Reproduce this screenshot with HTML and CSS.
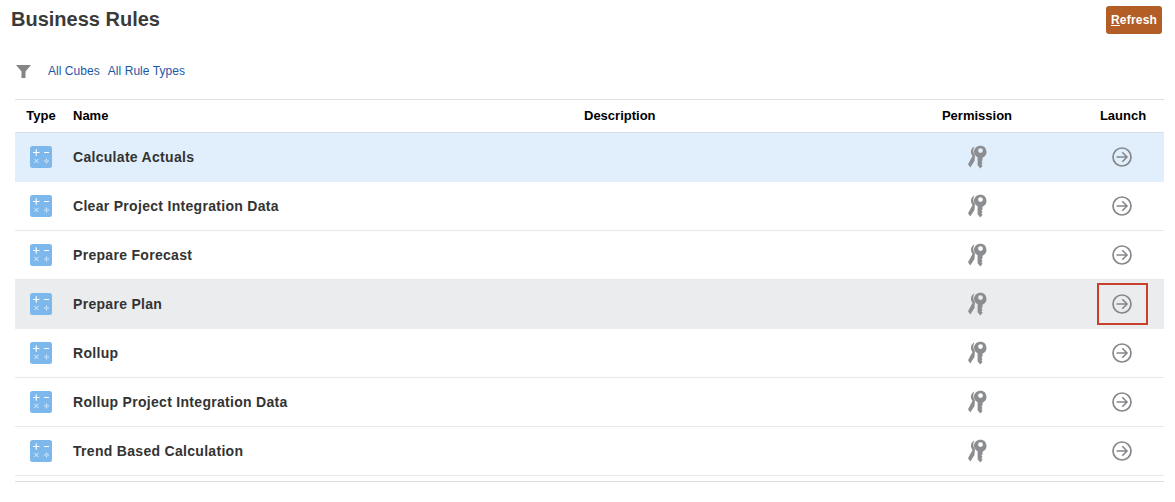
FILE: index.html
```html
<!DOCTYPE html>
<html lang="en">
<head>
<meta charset="utf-8">
<title>Business Rules</title>
<link rel="stylesheet" href="styles.css">
</head>
<body>
<svg class="defs" width="0" height="0" aria-hidden="true">
  <symbol id="calc" viewBox="0 0 22 22">
    <rect width="22" height="22" rx="2.5" fill="#7db8ec"/>
    <path d="M3 6.500h6.500M6.250 3.200v6.600M14 6.500h5" stroke="#fff" stroke-width="1.100" fill="none"/>
    <path d="M4.300 12.800l4.200 4.200M8.500 12.800l-4.200 4.200M14 15h5" stroke="#e6f2fc" stroke-width=".9" fill="none"/>
    <circle cx="16.500" cy="13.200" r=".7" fill="#e6f2fc"/>
    <circle cx="16.500" cy="16.800" r=".7" fill="#e6f2fc"/>
  </symbol>
  <symbol id="keys" viewBox="0 0 20 24">
    <path d="M6.500 1.500C3.300 2.800 2 6.500 3.800 9.800L4.500 11 0 19.300l2.300 3.200 4.200-6.500.4-5.800C4.800 7.500 4.800 4 6.500 1.500z" fill="#8b8d90"/>
    <path fill-rule="evenodd" d="M12.500.7C8.800.7 6 3.400 6 6.800c0 2.500 1.500 4.600 3.600 5.500v8l2.700 3.200 2.300-2.800-1.200-1.400 1.200-1.300-1.200-1.400 1.100-1.200v-2.600c2.300-.9 4-3 4-5.500C18.500 3.400 16.200.7 12.500.7zm0 2.500a2.400 2.400 0 1 1 0 4.800 2.400 2.400 0 0 1 0-4.800z" fill="#8b8d90"/>
  </symbol>
  <symbol id="go" viewBox="0 0 20 20">
    <circle cx="10" cy="10" r="9" fill="none" stroke="#85878a" stroke-width="1.700"/>
    <path d="M4.500 10h10.300M10.300 5.300l4.700 4.700-4.700 4.700" fill="none" stroke="#85878a" stroke-width="1.600"/>
  </symbol>
</svg>
<main class="page">
  <header class="top">
    <h1 class="title">Business Rules</h1>
    <button class="refresh" type="button"><u>R</u>efresh</button>
  </header>
  <div class="filters">
    <svg class="funnel" viewBox="0 0 15 13" aria-hidden="true"><path d="M0 0h15L9.500 6.500V13h-4V6.500z" fill="#858585"/></svg>
    <a class="link" href="#">All Cubes</a>
    <a class="link" href="#">All Rule Types</a>
  </div>
  <table class="rules">
    <colgroup>
      <col class="c-type"><col class="c-name"><col class="c-desc"><col class="c-perm"><col class="c-launch">
    </colgroup>
    <thead>
      <tr><th class="mid">Type</th><th>Name</th><th>Description</th><th class="mid">Permission</th><th class="mid">Launch</th></tr>
    </thead>
    <tbody>
      <tr class="selected"><td class="mid"><svg class="ic-calc"><use href="#calc"/></svg></td><td class="name">Calculate Actuals</td><td></td><td class="mid"><svg class="ic-keys"><use href="#keys"/></svg></td><td class="mid"><span class="launch"><svg class="ic-go"><use href="#go"/></svg></span></td></tr>
      <tr><td class="mid"><svg class="ic-calc"><use href="#calc"/></svg></td><td class="name">Clear Project Integration Data</td><td></td><td class="mid"><svg class="ic-keys"><use href="#keys"/></svg></td><td class="mid"><span class="launch"><svg class="ic-go"><use href="#go"/></svg></span></td></tr>
      <tr><td class="mid"><svg class="ic-calc"><use href="#calc"/></svg></td><td class="name">Prepare Forecast</td><td></td><td class="mid"><svg class="ic-keys"><use href="#keys"/></svg></td><td class="mid"><span class="launch"><svg class="ic-go"><use href="#go"/></svg></span></td></tr>
      <tr class="hover"><td class="mid"><svg class="ic-calc"><use href="#calc"/></svg></td><td class="name">Prepare Plan</td><td></td><td class="mid"><svg class="ic-keys"><use href="#keys"/></svg></td><td class="mid"><span class="launch marked"><svg class="ic-go"><use href="#go"/></svg></span></td></tr>
      <tr><td class="mid"><svg class="ic-calc"><use href="#calc"/></svg></td><td class="name">Rollup</td><td></td><td class="mid"><svg class="ic-keys"><use href="#keys"/></svg></td><td class="mid"><span class="launch"><svg class="ic-go"><use href="#go"/></svg></span></td></tr>
      <tr><td class="mid"><svg class="ic-calc"><use href="#calc"/></svg></td><td class="name">Rollup Project Integration Data</td><td></td><td class="mid"><svg class="ic-keys"><use href="#keys"/></svg></td><td class="mid"><span class="launch"><svg class="ic-go"><use href="#go"/></svg></span></td></tr>
      <tr><td class="mid"><svg class="ic-calc"><use href="#calc"/></svg></td><td class="name">Trend Based Calculation</td><td></td><td class="mid"><svg class="ic-keys"><use href="#keys"/></svg></td><td class="mid"><span class="launch"><svg class="ic-go"><use href="#go"/></svg></span></td></tr>
    </tbody>
  </table>
  <div class="foot-line"></div>
</main>
</body>
</html>
```
FILE: styles.css
```css
html, body {
  margin: 0;
  padding: 0;
  background: #fff;
  font-family: "Liberation Sans", Arial, sans-serif;
  overflow: hidden;
}
.defs { position: absolute; }
.page {
  width: 1175px;
  height: 502px;
  box-sizing: border-box;
  padding: 6px 11px 0 11px;
}
.top {
  display: flex;
  justify-content: space-between;
  align-items: flex-start;
  height: 28px;
  padding-right: 2px;
}
.title {
  margin: -2px 0 0;
  font-size: 20px;
  line-height: 30px;
  font-weight: bold;
  color: #3a3a3a;
}
.refresh {
  width: 56px;
  height: 28px;
  padding: 0;
  border: 0;
  border-radius: 3px;
  background: #b35e26;
  color: #fff;
  font: bold 12px "Liberation Sans", Arial, sans-serif;
  letter-spacing: .2px;
}
.filters {
  display: flex;
  align-items: center;
  height: 20px;
  margin-top: 27px;
  padding-left: 5px;
  gap: 8px;
}
.funnel {
  width: 15px;
  height: 13px;
  margin-right: 9px;
}
.link {
  font-size: 12px;
  letter-spacing: .05px;
  color: #1c57a5;
  text-decoration: none;
}
.rules {
  table-layout: fixed;
  border-collapse: separate;
  border-spacing: 0;
  width: 1149px;
  margin: 18px 0 0 4px;
  border-top: 1px solid #dfdfdf;
}
.c-type { width: 52px; }
.c-name { width: 511px; }
.c-desc { width: 294px; }
.c-perm { width: 210px; }
.c-launch { width: 82px; }
th {
  height: 33px;
  padding: 0 0 2px 6px;
  box-sizing: border-box;
  text-align: left;
  font-size: 13px;
  font-weight: bold;
  color: #000;
  border-bottom: 1px solid #d6dfe6;
}
td {
  height: 49px;
  padding: 0 0 0 6px;
  box-sizing: border-box;
  border-bottom: 1px solid #e8e8e8;
  vertical-align: middle;
}
th.mid {
  padding: 0 0 2px;
  text-align: center;
}
td.mid {
  padding: 0;
  text-align: center;
}
.name {
  font-size: 14px;
  font-weight: bold;
  color: #333;
  letter-spacing: .3px;
}
.selected td { background: #e1effc; border-bottom-color: #e1effc; }
.hover td { background: #ebecee; border-bottom-color: #ebecee; }
.ic-calc, .ic-keys, .ic-go { display: block; margin: 0 auto; }
.ic-calc { width: 22px; height: 22px; }
.ic-keys { width: 20px; height: 24px; transform: translateX(1px); }
.ic-go { width: 20px; height: 20px; }
.launch {
  display: flex;
  align-items: center;
  justify-content: center;
  box-sizing: border-box;
  width: 51px;
  height: 42px;
  margin: 0 auto;
  position: relative;
  left: -1px;
}
.marked { border: 2px solid #c8412f; }
.foot-line {
  width: 1149px;
  margin: 5px 0 0 4px;
  border-top: 1px solid #d9dfe5;
}
```
